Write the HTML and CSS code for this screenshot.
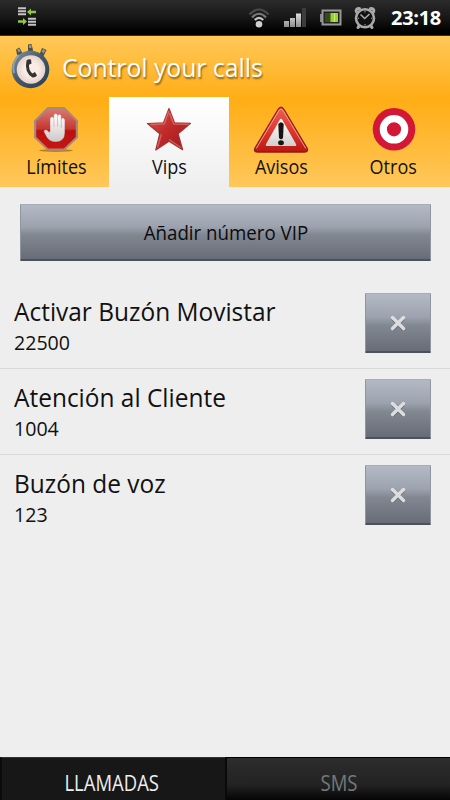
FILE: index.html
```html
<!DOCTYPE html>
<html lang="es">
<head>
  <meta charset="UTF-8">
  <meta name="viewport" content="width=device-width, initial-scale=1">
  <title>Control your calls</title>
  <link rel="stylesheet" href="styles.css">
</head>
<body>
  <div class="app">
    <!-- Status bar -->
    <div class="status-bar">
      <svg class="sync-icon" width="20" height="20" viewBox="0 0 20 20">
        <path d="M1 1.2h8M1 4.2h8M1 7.2h8M11 11.7h8M11 14.7h8M11 17.7h8" stroke="#c4c4c4" stroke-width="1.9"/>
        <path d="M10 5l4-3.6v2.3h5v2.6h-5v2.3zM10 14.5l-4 3.5v-2.2H1v-2.6h5V11z" fill="#8fc93e"/>
      </svg>
      <div class="status-right">
        <svg width="22" height="22" viewBox="0 0 22 22" fill="none">
          <path d="M1.5 7.5Q11-2.5 20.5 7.5" stroke="#4b4b4b" stroke-width="2.2"/>
          <path d="M4 10.5Q11 3 18 10.5" stroke="#777" stroke-width="2.2"/>
          <path d="M6.8 13Q11 8.6 15.2 13" stroke="#c4c4c4" stroke-width="2.2"/>
          <circle cx="11" cy="17.2" r="3.3" fill="#d0d0d0"/>
        </svg>
        <svg class="signal" width="23" height="20" viewBox="0 0 23 20">
          <defs>
            <linearGradient id="bars" x2="0" y2="1"><stop stop-color="#ddd"/><stop offset="1" stop-color="#8d8d8d"/></linearGradient>
          </defs>
          <path d="M0 13h5v6H0zM6 10h5v9H6zM12 5.500h5V19h-5z" fill="url(#bars)"/>
          <path d="M18 0h4v19h-4z" fill="#3c3c3c"/>
        </svg>
        <svg class="battery" width="23" height="18" viewBox="0 0 23 18">
          <path d="M1 5h3v8H1z" fill="#888"/>
          <rect x="3.500" y="1.500" width="18" height="14" fill="#222" stroke="#989898" stroke-width="2"/>
          <path d="M6 4h6v9H6z" fill="#364a1b"/>
          <path d="M11.500 4H19v9h-7.500z" fill="#97d32c"/>
          <path d="M15 4h1v9h-1z" fill="#c7ef75"/>
        </svg>
        <svg class="alarm" width="24" height="24" viewBox="0 0 24 24" fill="none" stroke="#a9a9a9">
          <path d="M3.500 6Q2 2.500 6.500 2.500M20.500 6q1.500-3.500-3-3.500M6.500 19.500L5 21.500M17.500 19.500l1.500 2" stroke-width="3" stroke-linecap="round"/>
          <circle cx="12" cy="12.300" r="9" stroke-width="2.600" fill="#111"/>
          <path d="M7.500 8.500l4.200 4 4.800-4.500" stroke-width="1.600"/>
          <path d="M12 5v1.500M12 18v1.500M5 12.300h1M18 12.300h1" stroke-width="1"/>
        </svg>
        <span class="clock">23:18</span>
      </div>
    </div>

    <!-- Title and tabs -->
    <div class="header">
      <div class="title-bar">
        <svg width="40" height="48" viewBox="0 0 40 48">
          <defs>
            <linearGradient id="rim" x2="1" y2="1"><stop stop-color="#8a9aa6"/><stop offset=".45" stop-color="#465a6b"/><stop offset="1" stop-color="#263e51"/></linearGradient>
            <radialGradient id="dial"><stop offset=".5" stop-color="#faebe5"/><stop offset="1" stop-color="#e5d2cc"/></radialGradient>
          </defs>
          <path d="M17 2.500l3.500-.5 1.500 6-1 5h-4zM5 7.500l3.500-2 2.500 5 1 4-3 2-3-4zM31 6l4.500 2-3.500 7-4-1z" fill="#4b5048"/>
          <path d="M18 3h2.500v3H18zM6 7.500l2.500-1 1 3-2 1zM32 7l2.500 1.500-2 3-2-2z" fill="#91938d"/>
          <circle cx="19.500" cy="27.500" r="18.800" fill="url(#rim)"/>
          <path d="M3 31a17 17 0 0 1 5-18" fill="none" stroke="#8fa2af" stroke-width="2"/>
          <circle cx="20" cy="27.500" r="14.300" fill="url(#dial)"/>
          <path d="M15.500 18.500q2-2 4.500-1l.5 4-2.500 1.200q-.5 5.500 3.500 8.800l2.500-1.500 2 3.500q-2 2.500-4.500 2-8.500-5-6-17z" fill="#343331"/>
        </svg>
        <h1>Control your calls</h1>
      </div>
      <div class="tabs">
        <div class="tab tab-limites">
          <svg width="46" height="48" viewBox="0 0 46 48">
            <defs>
              <linearGradient id="stop" x2="0" y2="1"><stop stop-color="#d97872"/><stop offset=".5" stop-color="#c53732"/><stop offset=".55" stop-color="#b9110e"/><stop offset="1" stop-color="#c71512"/></linearGradient>
              <linearGradient id="hand" x2="0" y2="1"><stop stop-color="#fff"/><stop offset="1" stop-color="#cfc8c8"/></linearGradient>
            </defs>
            <ellipse cx="23" cy="44.500" rx="17" ry="1.500" fill="#8a5a1b" opacity=".6"/>
            <path d="M14.500 1h17L45 14.500v17.200L31.500 44.500h-17L1 31.700V14.500z" fill="#a8887a"/>
            <path d="M15.200 3.200h15.600l12 12v15.800L30.800 42.500H15.200L3.200 31V15.200z" fill="url(#stop)"/>
            <path d="M17.500 24V13q0-1.800 1.500-1.800T20.500 13v8h.7V9.800Q21.200 8 22.700 8t1.500 1.800V21h.8V10.500q0-1.700 1.400-1.700t1.500 1.700V22h.8V14q0-1.600 1.300-1.600t1.400 1.600v13q0 8.500-8.700 8.500-7 0-9.500-6l-2-4q.3-1.900 2.500-1.200l3 2.600z" fill="url(#hand)" stroke="url(#hand)" stroke-width=".6"/>
          </svg>
          <span>Límites</span>
        </div>
        <div class="tab tab-vips active">
          <svg width="46" height="48" viewBox="0 0 46 48">
            <defs>
              <linearGradient id="star" x2="1" y2="1"><stop stop-color="#df5956"/><stop offset=".5" stop-color="#be2929"/><stop offset="1" stop-color="#9b1b1e"/></linearGradient>
            </defs>
            <path d="M23 2.500l5.500 14.300 16 .6-12.400 10.300 4.500 16L23 35.300 9.800 44l4-16.300L1.500 17.500l16-.7z" fill="url(#star)" stroke="#a63233" stroke-width="1.200" stroke-linejoin="round"/>
            <path d="M22.800 5l-4.500 12.800L4.500 18.500M43 18.500L27.800 18 23.500 7M11.500 41.500l4-13.500M35 41.500L23 33.500" fill="none" stroke="#ed8d87" stroke-width="1.500" opacity=".5"/>
          </svg>
          <span>Vips</span>
        </div>
        <div class="tab tab-avisos">
          <svg width="56" height="48" viewBox="0 0 56 48">
            <defs>
              <linearGradient id="warn" x2="0" y2="1"><stop stop-color="#e76052"/><stop offset=".45" stop-color="#e43c34"/><stop offset="1" stop-color="#ba1713"/></linearGradient>
              <linearGradient id="panel" x2="0" y2="1"><stop stop-color="#fff"/><stop offset="1" stop-color="#d3d1d0"/></linearGradient>
            </defs>
            <path d="M25 3.500q3-4.500 6 0l23 38.500q1.800 4-3 4H5q-4.800 0-3-4z" fill="url(#warn)" stroke="#8d1d13" stroke-width="1.300"/>
            <path d="M26 4.500q2-3 4 0l22.800 38M3.200 42.500L26 4.500" fill="none" stroke="#f2a092" stroke-width="1"/>
            <path d="M28 14l14 24.800H14z" fill="url(#panel)" stroke="url(#panel)" stroke-width="2.500" stroke-linejoin="round"/>
            <path d="M25.300 18q2.700-3.500 5.400 0l-.7 14q-2 2.500-4 0z" fill="#171313"/>
            <ellipse cx="28" cy="36.800" rx="2.900" ry="2.500" fill="#171313"/>
          </svg>
          <span>Avisos</span>
        </div>
        <div class="tab tab-otros">
          <svg width="46" height="48" viewBox="0 0 46 48">
            <circle cx="23" cy="23.300" r="21.300" fill="#d31736"/>
            <circle cx="23" cy="23.300" r="10.700" fill="none" stroke="#fff" stroke-width="7.200"/>
          </svg>
          <span>Otros</span>
        </div>
      </div>
    </div>

    <!-- VIP list -->
    <div class="content">
      <button class="btn add-btn"><span>Añadir número VIP</span></button>
      <div class="vip-row">
        <div class="vip-info">
          <div class="vip-name">Activar Buzón Movistar</div>
          <div class="vip-number">22500</div>
        </div>
        <button class="btn delete-btn" aria-label="Eliminar">
          <svg width="18" height="18" viewBox="0 0 18 18"><path d="M3.500 4.500l11 11M14.500 4.500l-11 11" stroke="#626870" stroke-width="3.400"/><path d="M3.500 3.500l11 11M14.500 3.500l-11 11" stroke="#dcdddf" stroke-width="3.400" stroke-linecap="round"/></svg>
        </button>
      </div>
      <div class="vip-row">
        <div class="vip-info">
          <div class="vip-name">Atención al Cliente</div>
          <div class="vip-number">1004</div>
        </div>
        <button class="btn delete-btn" aria-label="Eliminar">
          <svg width="18" height="18" viewBox="0 0 18 18"><path d="M3.500 4.500l11 11M14.500 4.500l-11 11" stroke="#626870" stroke-width="3.400"/><path d="M3.500 3.500l11 11M14.500 3.500l-11 11" stroke="#dcdddf" stroke-width="3.400" stroke-linecap="round"/></svg>
        </button>
      </div>
      <div class="vip-row">
        <div class="vip-info">
          <div class="vip-name">Buzón de voz</div>
          <div class="vip-number">123</div>
        </div>
        <button class="btn delete-btn" aria-label="Eliminar">
          <svg width="18" height="18" viewBox="0 0 18 18"><path d="M3.500 4.500l11 11M14.500 4.500l-11 11" stroke="#626870" stroke-width="3.400"/><path d="M3.500 3.500l11 11M14.500 3.500l-11 11" stroke="#dcdddf" stroke-width="3.400" stroke-linecap="round"/></svg>
        </button>
      </div>
    </div>

    <!-- Bottom tabs -->
    <div class="bottom-tabs">
      <div class="bottom-tab selected"><span>LLAMADAS</span></div>
      <div class="bottom-tab"><span>SMS</span></div>
    </div>
  </div>
</body>
</html>
```
FILE: styles.css
```css
* {
  margin: 0;
  padding: 0;
  box-sizing: border-box;
}
body {
  font-family: "Open Sans", "Noto Sans", sans-serif;
  background: #eee;
  color: #111;
}
svg {
  display: block;
  flex: none;
}
.app {
  width: 450px;
  height: 800px;
  display: flex;
  flex-direction: column;
  overflow: hidden;
}
/* Status bar */
.status-bar {
  height: 36px;
  padding: 0 9px 0 17px;
  display: flex;
  align-items: center;
  justify-content: space-between;
  background: linear-gradient(#2b2b2b, #171717 50%, #000 90%);
  border-bottom: 1px solid #3c2e10;
}
.sync-icon {
  margin-top: -2px;
}
.status-right {
  display: flex;
  align-items: center;
}
.signal {
  margin-left: 14px;
}
.battery {
  margin-left: 12px;
}
.alarm {
  margin-left: 11px;
}
.clock {
  width: 50px;
  margin-left: 14px;
  font-size: 20px;
  font-weight: 700;
  line-height: 37px;
  color: #fff;
  letter-spacing: -0.3px;
  white-space: nowrap;
}
/* Title */
.header {
  height: 151px;
  background: linear-gradient(#ffc859, #ffae17 61px, #ffae17 66px, #ffc75b);
}
.title-bar {
  height: 61px;
  padding: 6px 0 0 11px;
  display: flex;
}
.title-bar h1 {
  margin-left: 11px;
  padding-top: 7px;
  font-size: 26px;
  font-weight: 400;
  line-height: 36px;
  color: #fff;
  transform: scaleX(0.95);
  transform-origin: left;
  text-shadow: 1px 2px 2px #80601d;
}
/* Tabs */
.tabs {
  height: 90px;
  display: grid;
  grid-template-columns: 109px 120px 108px 113px;
}
.tab {
  padding-top: 9px;
  display: flex;
  flex-direction: column;
  align-items: center;
  font-size: 20px;
  line-height: 26px;
}
.tab svg {
  height: 48px;
}
.tab span {
  transform: scaleX(0.9);
}
.tab-limites {
  padding-left: 3px;
}
.tab-avisos {
  padding-right: 4px;
}
.tab.active {
  background: linear-gradient(#fff, #eee);
}
/* List */
.content {
  flex: 1;
  padding-top: 17px;
  background: #eee;
}
.btn {
  display: flex;
  align-items: center;
  justify-content: center;
  border: 1px solid #8f969f;
  border-top-color: #a6adb6;
  border-bottom: 2px solid #4b525d;
  border-radius: 1px;
  background: linear-gradient(#b4bac5, #9da3ae 40%, #828892 55%, #676c77);
  font-family: inherit;
  color: #0b0b0e;
}
.add-btn {
  width: 411px;
  height: 57px;
  margin: 0 0 22px 20px;
  font-size: 20px;
}
.add-btn span {
  transform: scaleX(0.935);
}
.vip-row {
  height: 86px;
  padding: 10px 19px 0 14px;
  display: flex;
  align-items: flex-start;
  justify-content: space-between;
  border-bottom: 1px solid #d8d8d8;
}
.vip-row:last-child {
  border-bottom: none;
}
.vip-name {
  font-size: 25px;
  line-height: 37px;
  transform: scaleX(0.978);
  transform-origin: left;
}
.vip-number {
  font-size: 20px;
  line-height: 26px;
  transform: scaleX(0.98);
  transform-origin: left;
}
.delete-btn {
  width: 66px;
  height: 60px;
}
/* Bottom tabs */
.bottom-tabs {
  height: 43px;
  display: flex;
}
.bottom-tab {
  width: 225px;
  display: flex;
  justify-content: center;
  font-size: 21px;
  line-height: 51px;
  color: #777;
  background: linear-gradient(#2d2d2d, #222 65%, #050505);
  border-top: 1px solid #000;
  border-left: 2px solid #0a0a0a;
}
.bottom-tab span {
  transform: scaleX(0.88);
}
.bottom-tab.selected {
  padding-right: 3px;
  color: #eee;
  background: #171717;
  border-top-color: #333;
}
```
